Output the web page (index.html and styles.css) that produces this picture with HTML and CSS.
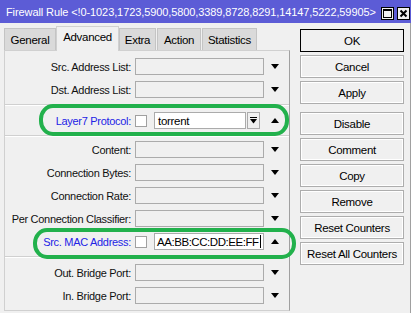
FILE: index.html
```html
<!DOCTYPE html>
<html>
<head>
<meta charset="utf-8">
<link rel="stylesheet" href="styles.css">
</head>
<body>
<div class="window">
  <div class="titlebar">
    <span class="title">Firewall Rule &lt;!0-1023,1723,5900,5800,3389,8728,8291,14147,5222,59905&gt;</span>
    <span class="tbtn"><svg width="13" height="13" viewBox="0 0 13 13"><rect x="0.5" y="0.5" width="12" height="12" fill="#f0f0f0" stroke="#000"/><rect x="2.5" y="2.5" width="8" height="8" fill="none" stroke="#000"/><line x1="2" y1="3.5" x2="11" y2="3.5" stroke="#000"/></svg></span>
    <span class="tbtn"><svg width="13" height="13" viewBox="0 0 13 13"><rect x="0.5" y="0.5" width="12" height="12" fill="#f0f0f0" stroke="#000"/><path d="M3.5 3.5 L9.5 9.5 M9.5 3.5 L3.5 9.5" stroke="#000" stroke-width="2"/></svg></span>
  </div>
  <div class="main">
    <div class="left">
      <div class="tabs">
        <div class="tab">General</div>
        <div class="tab active">Advanced</div>
        <div class="tab">Extra</div>
        <div class="tab">Action</div>
        <div class="tab">Statistics</div>
      </div>
      <div class="panel">
        <div class="row"><span class="lbl">Src. Address List:</span><span class="field"></span><span class="tri down"></span></div>
        <div class="row"><span class="lbl">Dst. Address List:</span><span class="field"></span><span class="tri down"></span></div>
        <div class="sep"></div>
        <div class="row"><span class="lbl blue">Layer7 Protocol:</span><span class="chk"></span><span class="field white short">torrent</span><span class="mini"><svg width="9" height="9" viewBox="0 0 9 9"><rect x="1" y="1" width="7" height="1" fill="#000"/><path d="M1 3 H8 L4.5 7.5 Z" fill="#000"/></svg></span><span class="tri up gap2"></span></div>
        <div class="sep sep2"></div>
        <div class="row"><span class="lbl">Content:</span><span class="field"></span><span class="tri down"></span></div>
        <div class="row"><span class="lbl">Connection Bytes:</span><span class="field"></span><span class="tri down"></span></div>
        <div class="row"><span class="lbl">Connection Rate:</span><span class="field"></span><span class="tri down"></span></div>
        <div class="row"><span class="lbl">Per Connection Classifier:</span><span class="field"></span><span class="tri down"></span></div>
        <div class="row"><span class="lbl blue">Src. MAC Address:</span><span class="chk"></span><span class="field white mac">AA:BB:CC:DD:EE:FF<span class="caret"></span></span><span class="tri up"></span></div>
        <div class="sep"></div>
        <div class="row"><span class="lbl">Out. Bridge Port:</span><span class="field"></span><span class="tri down"></span></div>
        <div class="row"><span class="lbl">In. Bridge Port:</span><span class="field"></span><span class="tri down"></span></div>
      </div>
    </div>
    <div class="right">
      <div class="btn default">OK</div>
      <div class="btn">Cancel</div>
      <div class="btn">Apply</div>
      <div class="btn spaced">Disable</div>
      <div class="btn">Comment</div>
      <div class="btn">Copy</div>
      <div class="btn">Remove</div>
      <div class="btn">Reset Counters</div>
      <div class="btn">Reset All Counters</div>
    </div>
  </div>
  <div class="hl hl1"></div>
  <div class="hl hl2"></div>
</div>
</body>
</html>
```

FILE: styles.css
```css
* { box-sizing: border-box; }
html, body { margin: 0; padding: 0; }
body {
  width: 413px;
  height: 313px;
  overflow: hidden;
  background: #f0f0f0;
  font-family: "Liberation Sans", Arial, sans-serif;
  font-size: 11px;
  letter-spacing: -0.3px;
  color: #000;
}
.window {
  position: relative;
  width: 413px;
  height: 313px;
  border-right: 2px solid #fff;
}
.titlebar {
  height: 23px;
  background: #5c5cd6;
  color: #fff;
  display: flex;
  align-items: center;
  padding-left: 6px;
}
.title {
  letter-spacing: -0.1px;
  font-size: 11px;
  width: 372px;
  white-space: nowrap;
}
.tbtn { display: flex; margin-left: 3px; margin-top: 3px; }
.tbtn:first-of-type { margin-left: 0; }
.main {
  display: flex;
  height: 290px;
  border-right: 1px solid #a0a0a0;
}
.left {
  width: 290px;
  padding-left: 4px;
  padding-top: 2px;
  padding-bottom: 2px;
  display: flex;
  flex-direction: column;
}
.tabs {
  display: flex;
  align-items: flex-end;
  height: 25px;
}
.tab {
  height: 22px;
  background: #dadada;
  border: 1px solid #c4c4c4;
  border-bottom: none;
  padding: 0 6px;
  display: flex;
  align-items: center;
  justify-content: center;
  margin-right: 1px;
  font-size: 11.5px;
}
.tab:nth-child(1) { width: 52px; }
.tab:nth-child(2) { width: 63px; }
.tab:nth-child(3) { width: 37px; }
.tab:nth-child(4) { width: 44px; }
.tab:nth-child(5) { width: 55px; }
.tab.active {
  height: 25px;
  background: #f0f0f0;
  border-color: #d0d0d0;
  align-items: flex-start;
  padding-top: 4px;
  margin-right: 0;
  margin-left: -1px;
  position: relative;
  top: 1px;
}
.panel {
  width: 286px;
  flex: 1;
  border-top: 1px solid #d0d0d0;
  border-left: 1px solid #d0d0d0;
  border-right: 1px solid #a0a0a0;
  border-bottom: 1px solid #d0d0d0;
  padding-top: 7px;
  display: flex;
  flex-direction: column;
  gap: 6px;
}
.row {
  height: 17px;
  display: flex;
  align-items: center;
}
.lbl {
  width: 126px;
  text-align: right;
  white-space: nowrap;
  color: #111;
}
.lbl.blue { color: #2323e6; }
.field {
  margin-left: 4px;
  width: 129px;
  height: 17px;
  border: 1px solid #ababab;
  background: #f0f0f0;
  display: flex;
  align-items: center;
  padding-left: 3px;
  font-size: 11.5px;
  color: #000;
  white-space: nowrap;
  overflow: hidden;
}
.field.white { background: #fff; margin-left: 7px; }
.field.short { width: 92px; }
.field.mac { width: 110px; letter-spacing: -0.45px; padding-left: 2px; }
.caret { width: 1px; height: 13px; background: #000; margin-left: 1px; flex: none; }
.chk {
  margin-left: 4px;
  width: 12px;
  height: 12px;
  border: 1px solid #a0a0a0;
  background: #fff;
}
.mini {
  margin-left: 1px;
  width: 13px;
  height: 17px;
  border: 1px solid #ababab;
  background: #f0f0f0;
  display: flex;
  align-items: center;
  justify-content: center;
}
.tri {
  margin-left: 7px;
  width: 0;
  height: 0;
  border-left: 4.5px solid transparent;
  border-right: 4.5px solid transparent;
}
.tri.down { border-top: 5px solid #000; }
.tri.up { border-bottom: 5px solid #000; }
.tri.gap2 { margin-left: 11px; }
.sep {
  height: 2px;
  background: #d0d0d0;
  border-bottom: 1px solid #fff;
  margin: 0;
}
.sep2 { margin-bottom: -2px; }
.right {
  margin-left: 10px;
  padding-top: 6px;
  display: flex;
  flex-direction: column;
  gap: 3px;
}
.btn {
  width: 104px;
  height: 23px;
  border: 1px solid #adadad;
  background: #f0f0f0;
  display: flex;
  align-items: center;
  justify-content: center;
  font-size: 11.5px;
  box-shadow: inset 0 0 0 1px #fff;
}
.btn.default { border-color: #000; box-shadow: none; }
.btn.spaced { margin-top: 5px; }
.hl {
  position: absolute;
  border: 4px solid #22b14c;
  border-radius: 14px / 15px;
}
.hl1 { left: 39px; top: 104px; width: 250px; height: 32px; }
.hl2 { left: 33px; top: 228px; width: 263px; height: 31px; }
```
